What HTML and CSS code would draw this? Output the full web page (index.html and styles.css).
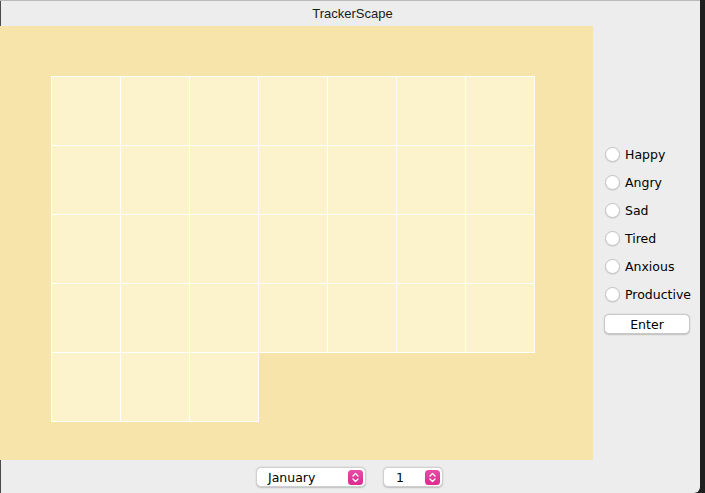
FILE: index.html
```html
<!DOCTYPE html>
<html>
<head>
<meta charset="utf-8">
<title>TrackerScape</title>
<link rel="stylesheet" href="styles.css">
</head>
<body>
<div class="window">
  <div class="titlebar">TrackerScape</div>
  <div class="main">
    <div class="canvas">
      <div class="calendar">
        <div class="cell"></div><div class="cell"></div><div class="cell"></div><div class="cell"></div><div class="cell"></div><div class="cell"></div><div class="cell"></div>
        <div class="cell"></div><div class="cell"></div><div class="cell"></div><div class="cell"></div><div class="cell"></div><div class="cell"></div><div class="cell"></div>
        <div class="cell"></div><div class="cell"></div><div class="cell"></div><div class="cell"></div><div class="cell"></div><div class="cell"></div><div class="cell"></div>
        <div class="cell"></div><div class="cell"></div><div class="cell"></div><div class="cell"></div><div class="cell"></div><div class="cell"></div><div class="cell"></div>
        <div class="cell"></div><div class="cell"></div><div class="cell"></div>
      </div>
    </div>
    <div class="side">
      <div class="radio"><span class="dot"></span><span class="label">Happy</span></div>
      <div class="radio"><span class="dot"></span><span class="label">Angry</span></div>
      <div class="radio"><span class="dot"></span><span class="label">Sad</span></div>
      <div class="radio"><span class="dot"></span><span class="label">Tired</span></div>
      <div class="radio"><span class="dot"></span><span class="label">Anxious</span></div>
      <div class="radio"><span class="dot"></span><span class="label">Productive</span></div>
      <div class="button">Enter</div>
    </div>
  </div>
  <div class="bottombar">
    <div class="combo combo-month">
      <span class="combo-text">January</span>
      <span class="arrows"><svg width="15" height="15" viewBox="0 0 15 15"><path d="M5 6 L7.5 3.6 L10 6 M5 9 L7.5 11.4 L10 9" fill="none" stroke="#fff" stroke-width="1.4" stroke-linecap="round" stroke-linejoin="round"/></svg></span>
    </div>
    <div class="combo combo-day">
      <span class="combo-text">1</span>
      <span class="arrows"><svg width="15" height="15" viewBox="0 0 15 15"><path d="M5 6 L7.5 3.6 L10 6 M5 9 L7.5 11.4 L10 9" fill="none" stroke="#fff" stroke-width="1.4" stroke-linecap="round" stroke-linejoin="round"/></svg></span>
    </div>
  </div>
</div>
</body>
</html>
```
FILE: styles.css
```css
html, body {
  margin: 0;
  padding: 0;
  background: #1f1f1f;
}
body {
  width: 705px;
  height: 493px;
  overflow: hidden;
  font-family: "DejaVu Sans", "Liberation Sans", sans-serif;
}
.window {
  width: 700px;
  height: 492px;
  background: #ededed;
  border-top: 1px solid #b9b9b9;
  border-bottom-right-radius: 6px;
  box-shadow: inset 1px 0 0 #4a4a4a;
  display: flex;
  flex-direction: column;
}
.titlebar {
  height: 25px;
  display: flex;
  align-items: center;
  justify-content: center;
  font-family: "Liberation Sans", Arial, sans-serif;
  font-size: 13px;
  color: #1a1a1a;
  padding-left: 5px;
}
.main {
  display: flex;
  height: 434px;
}
.canvas {
  width: 593px;
  height: 434px;
  background: #f6e4aa;
  padding: 51px 0 0 52px;
  box-sizing: border-box;
}
.calendar {
  display: grid;
  grid-template-columns: repeat(7, 68px);
  grid-auto-rows: 68px;
  gap: 1px;
}
.cell {
  background: #fcf3cd;
  box-shadow: 0 0 0 1px #ffffff;
}
.side {
  flex: 1;
  padding-top: 114px;
  padding-left: 12px;
  display: flex;
  flex-direction: column;
}
.radio {
  height: 28px;
  display: flex;
  align-items: center;
}
.dot {
  width: 13px;
  height: 13px;
  border-radius: 50%;
  background: #ffffff;
  border: 0.5px solid #c4c4c4;
  box-shadow: 0 0.5px 1px rgba(0, 0, 0, 0.15);
  margin-right: 6px;
}
.label {
  font-size: 12.5px;
  color: #000000;
  margin-left: -1px;
}
.button {
  margin-top: 6px;
  margin-left: -1px;
  width: 86px;
  height: 20px;
  box-sizing: border-box;
  background: #ffffff;
  border: 0.5px solid #c8c8c8;
  border-radius: 5px;
  box-shadow: 0 0.5px 1.5px rgba(0, 0, 0, 0.2);
  font-size: 12.5px;
  color: #000000;
  display: flex;
  align-items: center;
  justify-content: center;
}
.bottombar {
  height: 33px;
  display: flex;
  align-items: center;
  justify-content: center;
  gap: 17px;
  padding-right: 1px;
  padding-top: 1px;
  box-sizing: border-box;
}
.combo {
  height: 20px;
  box-sizing: border-box;
  background: #ffffff;
  border: 0.5px solid #d0d0d0;
  border-radius: 5px;
  box-shadow: 0 0.5px 1.5px rgba(0, 0, 0, 0.2);
  display: flex;
  align-items: center;
  justify-content: space-between;
  padding: 0 2px 0 11px;
  font-size: 12.5px;
  color: #000000;
}
.combo-month {
  width: 110px;
}
.combo-day {
  width: 60px;
  padding-left: 12px;
}
.arrows {
  width: 15px;
  height: 15px;
  border-radius: 3.5px;
  background: linear-gradient(#ea4aa7, #dc2a8f);
  display: flex;
}
.arrows svg {
  display: block;
}
```
